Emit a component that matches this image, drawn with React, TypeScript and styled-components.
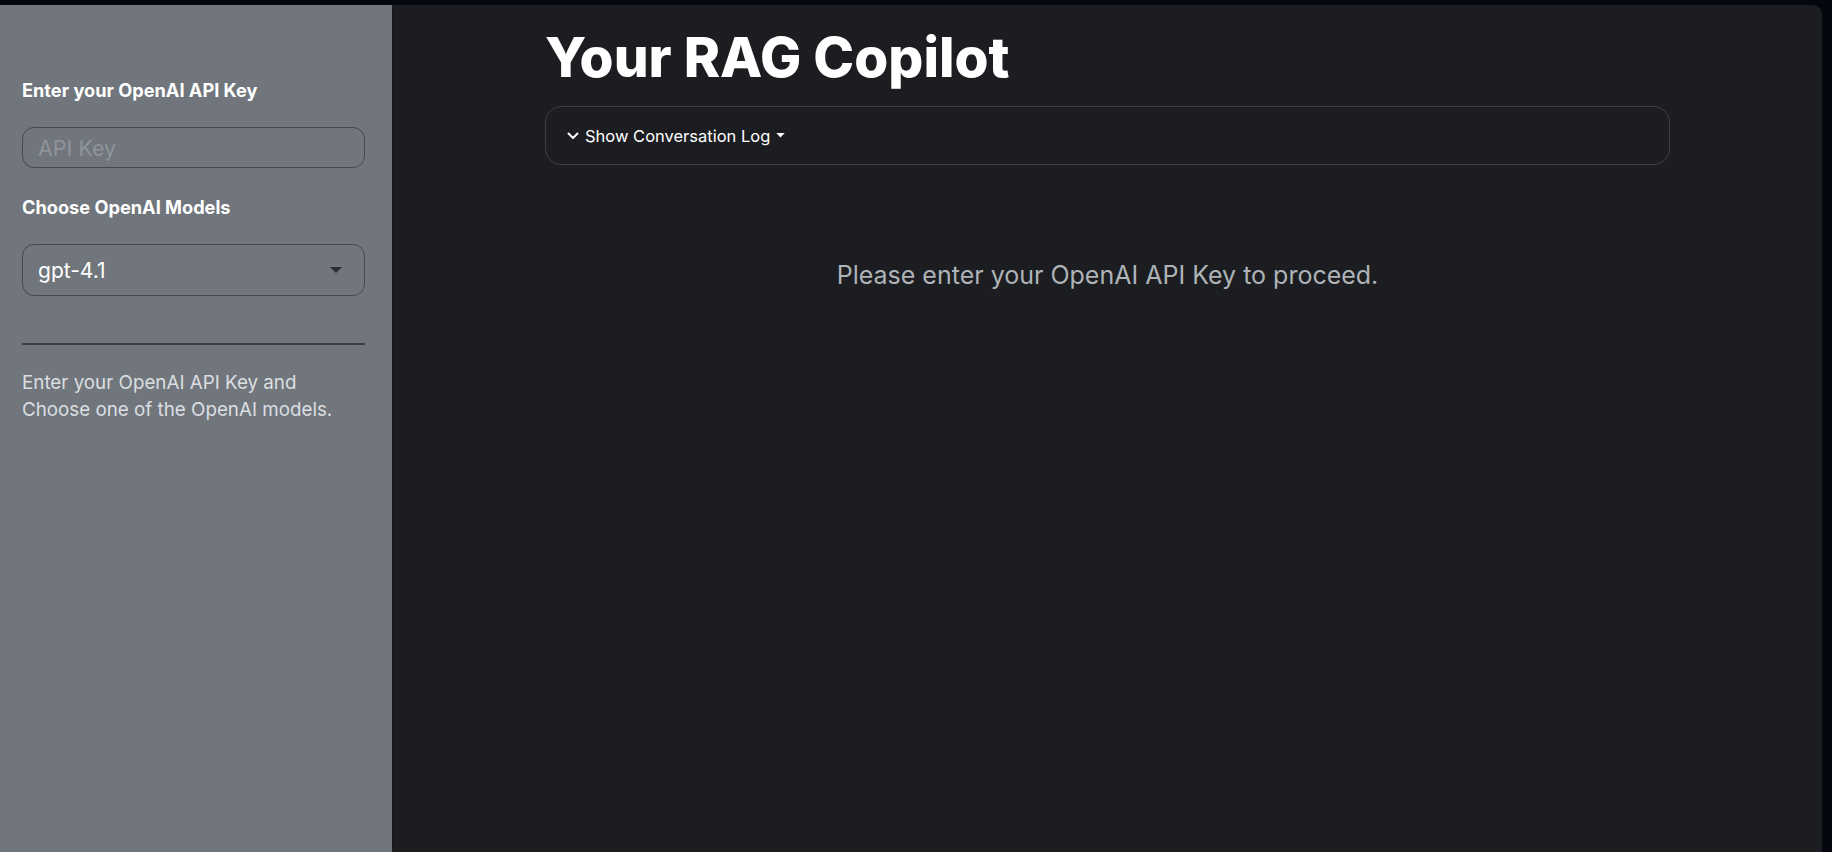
import React from "react";
import styled, { createGlobalStyle } from "styled-components";

const Global = createGlobalStyle`
  html, body { margin: 0; padding: 0; background: #05070f; }
  body { font-family: Inter, "Noto Sans", sans-serif; }
  * { box-sizing: border-box; }
`;

const Shell = styled.div`
  display: flex;
  height: 852px;
  padding: 5px 10px 0 0;
  background: #05070f;
`;

const Sidebar = styled.aside`
  width: 392px;
  flex: none;
  background: #70767c;
  padding: 72px 27px 0 22px;
  display: flex;
  flex-direction: column;
`;

const Label = styled.div<{ $gap?: number }>`
  color: #ffffff;
  font-size: 18.2px;
  font-weight: 700;
  line-height: 26px;
  margin-bottom: ${(p) => p.$gap ?? 24}px;
`;

const TextInput = styled.input`
  width: 100%;
  height: 41px;
  flex: none;
  border-radius: 12px;
  border: 1px solid #45494d;
  background: transparent;
  padding: 0 15px;
  font-family: Inter, sans-serif;
  font-size: 21.5px;
  color: #fff;
  outline: none;
  margin-bottom: 26px;
  &::placeholder { color: #8f9499; }
`;

const Select = styled.div`
  height: 52px;
  flex: none;
  border-radius: 12px;
  border: 1px solid #45494d;
  display: flex;
  align-items: center;
  justify-content: space-between;
  padding: 0 22px 0 15px;
  color: #ffffff;
  font-size: 21px;
`;

const Caret = styled.span`
  width: 0;
  height: 0;
  border-left: 6px solid transparent;
  border-right: 6px solid transparent;
  border-top: 6px solid #2b2e31;
`;

const Divider = styled.hr`
  border: none;
  border-top: 2px solid #3b3f43;
  margin: 47px 0 24px;
`;

const Help = styled.p`
  margin: 0;
  color: #dcdfe2;
  font-size: 18.8px;
  line-height: 27px;
`;

const Main = styled.main`
  flex: 1;
  background: #1c1d21;
  border-top-right-radius: 9px;
  border-left: 1px solid #17181b;
  padding: 20px 152px 0 152px;
  display: flex;
  flex-direction: column;
`;

const Title = styled.h1`
  margin: 0 0 16px;
  color: #ffffff;
  font-size: 55px;
  font-weight: 800;
  letter-spacing: 0;
  line-height: 65px;
`;

const Expander = styled.div`
  height: 59px;
  flex: none;
  border: 1px solid #3e3f43;
  border-radius: 16px;
  display: flex;
  align-items: center;
  padding-left: 21px;
  gap: 6px;
  color: #ffffff;
  font-size: 16.5px;
`;

const Notice = styled.div`
  margin-top: 95px;
  text-align: center;
  color: #aeb3b8;
  font-size: 25px;
  line-height: 30px;
`;

export default function App() {
  return (
    <>
      <Global />
      <Shell>
        <Sidebar>
          <Label>Enter your OpenAI API Key</Label>
          <TextInput placeholder="API Key" />
          <Label>Choose OpenAI Models</Label>
          <Select>
            <span>gpt-4.1</span>
            <Caret />
          </Select>
          <Divider />
          <Help>
            Enter your OpenAI API Key and
            <br />
            Choose one of the OpenAI models.
          </Help>
        </Sidebar>
        <Main>
          <Title>Your RAG Copilot</Title>
          <Expander>
            <svg width="12" height="12" viewBox="0 0 24 24" fill="none" stroke="#fff" strokeWidth="4" strokeLinecap="round" strokeLinejoin="round">
              <polyline points="3 7 12 16 21 7" />
            </svg>
            <span>Show Conversation Log</span>
            <svg width="9" height="5" viewBox="0 0 10 6">
              <polygon points="0,0 10,0 5,5.5" fill="#fff" />
            </svg>
          </Expander>
          <Notice>Please enter your OpenAI API Key to proceed.</Notice>
        </Main>
      </Shell>
    </>
  );
}
